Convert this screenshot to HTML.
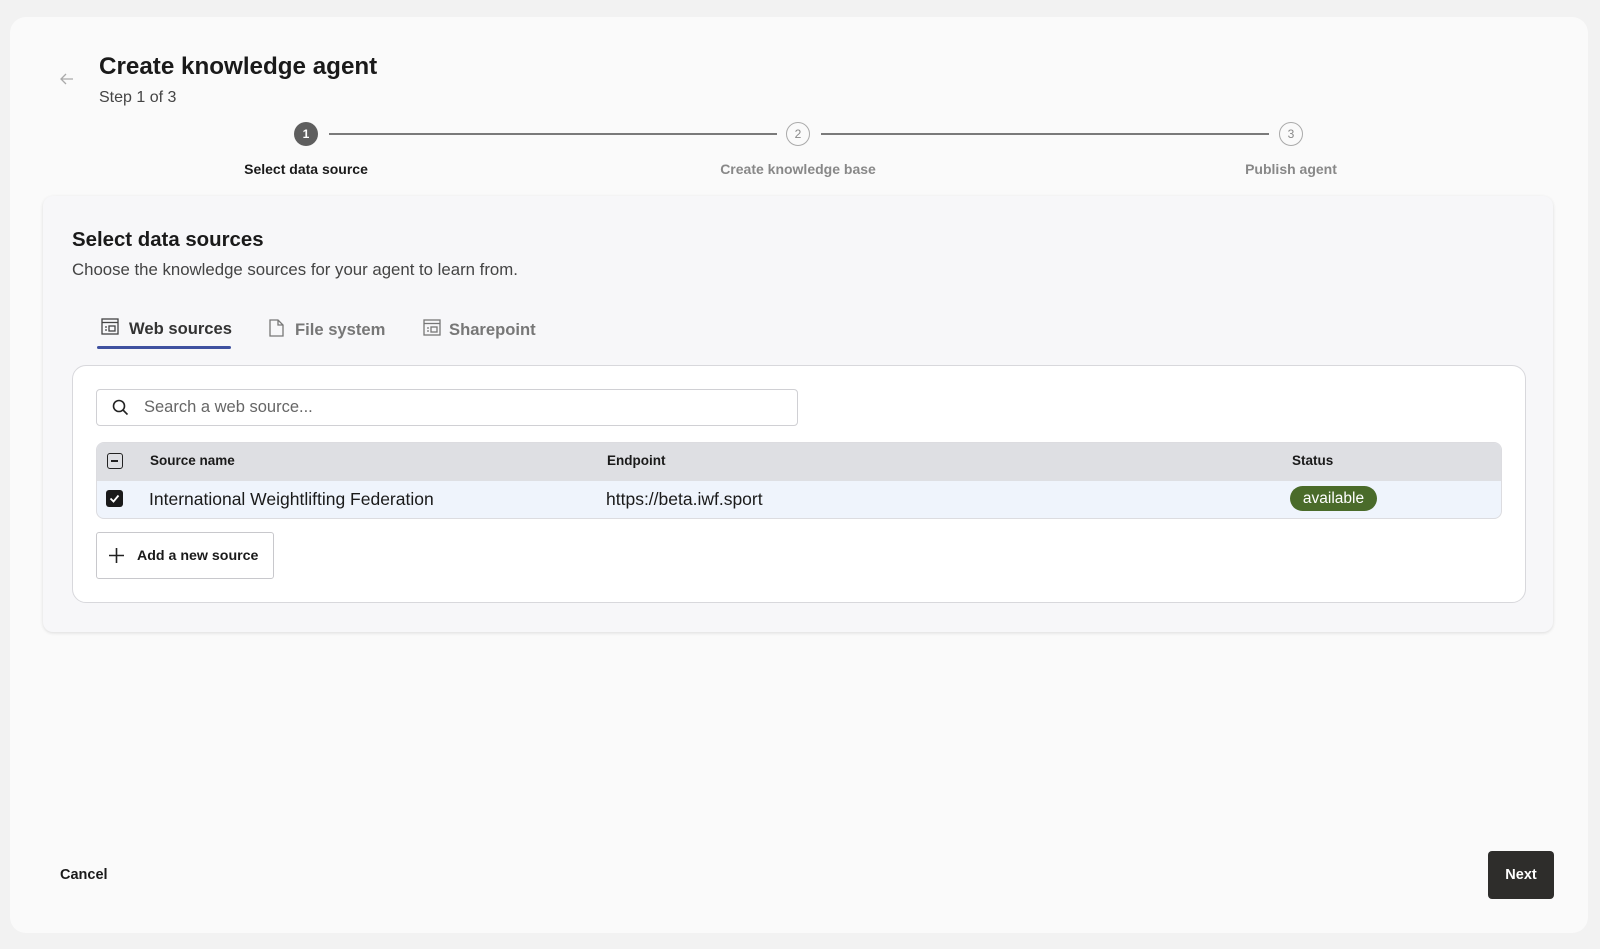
<!DOCTYPE html>
<html><head><meta charset="utf-8"><style>
*{box-sizing:border-box;margin:0;padding:0}
body{width:1600px;height:949px;background:#f2f2f2;font-family:"Liberation Sans",sans-serif;color:#1a1a1a;position:relative;overflow:hidden}
.abs{position:absolute}
.panel{left:10px;top:17px;width:1578px;height:916px;background:#fafafa;border-radius:16px}
.t{white-space:nowrap}
.circ{width:24px;height:24px;border-radius:50%;font-size:12px;font-weight:bold;display:flex;align-items:center;justify-content:center}
.card{left:43px;top:196px;width:1510px;height:436px;background:#f7f7f9;border-radius:10px;box-shadow:0 1px 3px rgba(0,0,0,.12)}
.box{left:72px;top:365px;width:1454px;height:238px;background:#fff;border:1px solid #d8d8dc;border-radius:14px}
</style></head><body>
<div class="abs panel"></div>
<svg class="abs" style="left:60px;top:73px" width="14" height="12" viewBox="0 0 14 12"><path d="M13 6H1M6 1L1 6l5 5" fill="none" stroke="#aaa" stroke-width="1.3"/></svg>
<div class="abs t" style="left:99px;top:53px;font-size:24.2px;font-weight:bold">Create knowledge agent</div>
<div class="abs t" style="left:99px;top:89px;font-size:16px;color:#444">Step 1 of 3</div>
<div class="abs" style="left:329px;top:133px;width:448px;height:2px;background:#7a7a7a"></div>
<div class="abs" style="left:821px;top:133px;width:448px;height:2px;background:#7a7a7a"></div>
<div class="abs circ" style="left:294px;top:122px;background:#5e5e5e;color:#fff">1</div>
<div class="abs circ" style="left:786px;top:122px;border:1.5px solid #aaa;color:#888;background:#fafafa;font-weight:normal">2</div>
<div class="abs circ" style="left:1279px;top:122px;border:1.5px solid #aaa;color:#888;background:#fafafa;font-weight:normal">3</div>
<div class="abs t" style="left:206px;width:200px;text-align:center;top:161px;font-size:14px;font-weight:bold">Select data source</div>
<div class="abs t" style="left:698px;width:200px;text-align:center;top:161px;font-size:14px;font-weight:bold;color:#888">Create knowledge base</div>
<div class="abs t" style="left:1191px;width:200px;text-align:center;top:161px;font-size:14px;font-weight:bold;color:#888">Publish agent</div>
<div class="abs card"></div>
<div class="abs t" style="left:72px;top:229px;font-size:20.4px;font-weight:bold">Select data sources</div>
<div class="abs t" style="left:72px;top:260px;font-size:16.8px;color:#444">Choose the knowledge sources for your agent to learn from.</div>
<svg class="abs" style="left:101px;top:318px" width="18" height="17" viewBox="0 0 18 17"><g fill="none" stroke="#444" stroke-width="1.3"><rect x="1" y="1" width="16" height="15"/><path d="M1 4.5h16"/><rect x="8" y="8" width="6" height="5"/><path d="M4 9h2M4 12h2"/></g></svg>
<div class="abs t" style="left:129px;top:319px;font-size:16.6px;font-weight:bold;color:#333">Web sources</div>
<div class="abs" style="left:97px;top:346px;width:134px;height:3px;background:#3f51a0;border-radius:2px"></div>
<svg class="abs" style="left:269px;top:319px" width="15" height="18" viewBox="0 0 15 18"><path d="M1 1h8l5 5v11H1z M9 1v5h5" fill="none" stroke="#777" stroke-width="1.3"/></svg>
<div class="abs t" style="left:295px;top:320px;font-size:16.6px;font-weight:bold;color:#777">File system</div>
<svg class="abs" style="left:423px;top:319px" width="18" height="17" viewBox="0 0 18 17"><g fill="none" stroke="#777" stroke-width="1.3"><rect x="1" y="1" width="16" height="15"/><path d="M1 4.5h16"/><rect x="8" y="8" width="6" height="5"/><path d="M4 9h2M4 12h2"/></g></svg>
<div class="abs t" style="left:449px;top:320px;font-size:16.6px;font-weight:bold;color:#777">Sharepoint</div>
<div class="abs box"></div>
<div class="abs" style="left:96px;top:389px;width:702px;height:37px;border:1px solid #d0d0d4;border-radius:4px;background:#fff"></div>
<svg class="abs" style="left:112px;top:399px" width="17" height="17" viewBox="0 0 17 17"><circle cx="7" cy="7" r="5.5" fill="none" stroke="#222" stroke-width="1.6"/><path d="M11 11l4.5 4.5" stroke="#222" stroke-width="1.6"/></svg>
<div class="abs t" style="left:144px;top:398px;font-size:16.5px;color:#666">Search a web source...</div>
<div class="abs" style="left:96px;top:442px;width:1406px;height:77px;border:1px solid #dcdce0;border-radius:8px;overflow:hidden;background:#eff4fc">
<div style="height:38px;background:#dedfe3"></div></div>
<div class="abs" style="left:107px;top:453px;width:16px;height:16px;border:1.5px solid #222;border-radius:3px"><div style="position:absolute;left:3px;top:6px;width:7px;height:1.5px;background:#222"></div></div>
<div class="abs t" style="left:150px;top:453px;font-size:13.5px;font-weight:bold">Source name</div>
<div class="abs t" style="left:607px;top:453px;font-size:13.5px;font-weight:bold">Endpoint</div>
<div class="abs t" style="left:1292px;top:453px;font-size:13.5px;font-weight:bold">Status</div>
<div class="abs" style="left:106px;top:490px;width:17px;height:17px;background:#1a1a1a;border-radius:3px"><svg width="17" height="17" viewBox="0 0 17 17"><path d="M4.5 8.5l3 3 5-6" fill="none" stroke="#fff" stroke-width="1.8"/></svg></div>
<div class="abs t" style="left:149px;top:489px;font-size:17.5px">International Weightlifting Federation</div>
<div class="abs t" style="left:606px;top:489px;font-size:17.5px">https://beta.iwf.sport</div>
<div class="abs t" style="left:1290px;top:486px;width:87px;height:25px;border-radius:13px;background:#4a6b2a;color:#fff;font-size:15.5px;text-align:center;line-height:25px">available</div>
<div class="abs" style="left:96px;top:532px;width:178px;height:47px;border:1px solid #c8c8cc;border-radius:3px;background:#fff"></div>
<svg class="abs" style="left:109px;top:548px" width="15" height="15" viewBox="0 0 15 15"><path d="M7.5 0v15M0 7.5h15" stroke="#222" stroke-width="1.6"/></svg>
<div class="abs t" style="left:137px;top:548px;font-size:14.2px;font-weight:bold">Add a new source</div>
<div class="abs t" style="left:60px;top:867px;font-size:14.5px;font-weight:bold">Cancel</div>
<div class="abs t" style="left:1488px;top:851px;width:66px;height:48px;background:#2e2d2b;border-radius:4px;color:#fff;font-size:14.5px;font-weight:bold;text-align:center;line-height:48px">Next</div>
</body></html>
